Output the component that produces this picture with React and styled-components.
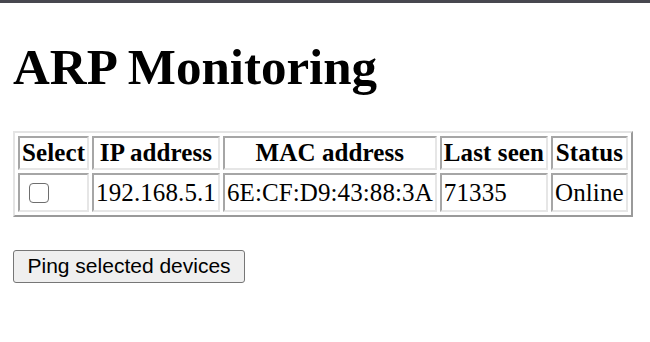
import React from 'react';
import styled, { createGlobalStyle } from 'styled-components';

const GlobalStyle = createGlobalStyle`
    html, body {
        margin: 0;
        padding: 0;
        background: #ffffff;
    }
    body {
        font-family: "Liberation Serif", "Times New Roman", serif;
        font-size: 25px;
        color: #000000;
    }
`

const TopBar = styled.div`
    height: 3px;
    background: #47474f;
`

const Page = styled.div`
    padding: 0 13px;
    >h1{
        font-size: 51px;
        font-weight: bold;
        line-height: 1.15;
        margin: 35px 0 34px 0;
    }
`

const DeviceTable = styled.table`
    border-collapse: separate;
    border-spacing: 3px;
    border: 2px solid;
    border-color: #e4e4e4 #9a9a9a #9a9a9a #e4e4e4;
    letter-spacing: 0.1px;
    white-space: nowrap;
    th, td{
        border: 2px solid;
        border-color: #a6a6a6 #e6e6e6 #e6e6e6 #a6a6a6;
        padding: 1px 2px;
        line-height: 1.15;
        font-size: 25px;
    }
    th{
        font-weight: bold;
        text-align: center;
    }
    td{
        text-align: left;
        height: 35px;
        padding-top: 0;
        padding-bottom: 0;
    }
`

const Checkbox = styled.input`
    display: block;
    width: 20px;
    height: 20px;
    margin: 2px 4px 2px 7px;
    appearance: none;
    border: 1.5px solid #6e6e6e;
    border-radius: 4px;
    background: #ffffff;
`

const Actions = styled.div`
    margin-top: 33px;
`

const PingButton = styled.button`
    font-family: "Liberation Sans", Arial, sans-serif;
    font-size: 21px;
    color: #000000;
    background: #efefef;
    border: 1.5px solid #767676;
    border-radius: 3px;
    padding: 3px 13.5px;
    line-height: 1.15;
`

const devices = [
    { ip: '192.168.5.1', mac: '6E:CF:D9:43:88:3A', lastSeen: '71335', status: 'Online' },
]

export default function App() {
  return (
      <>
          <GlobalStyle />
          <TopBar />
          <Page>
              <h1>ARP Monitoring</h1>
              <DeviceTable>
                  <thead>
                      <tr>
                          <th>Select</th>
                          <th>IP address</th>
                          <th>MAC address</th>
                          <th>Last seen</th>
                          <th>Status</th>
                      </tr>
                  </thead>
                  <tbody>
                      {devices.map(d => (
                          <tr key={d.mac}>
                              <td><Checkbox type='checkbox' /></td>
                              <td>{d.ip}</td>
                              <td>{d.mac}</td>
                              <td>{d.lastSeen}</td>
                              <td>{d.status}</td>
                          </tr>
                      ))}
                  </tbody>
              </DeviceTable>
              <Actions>
                  <PingButton>Ping selected devices</PingButton>
              </Actions>
          </Page>
      </>
  )
}
